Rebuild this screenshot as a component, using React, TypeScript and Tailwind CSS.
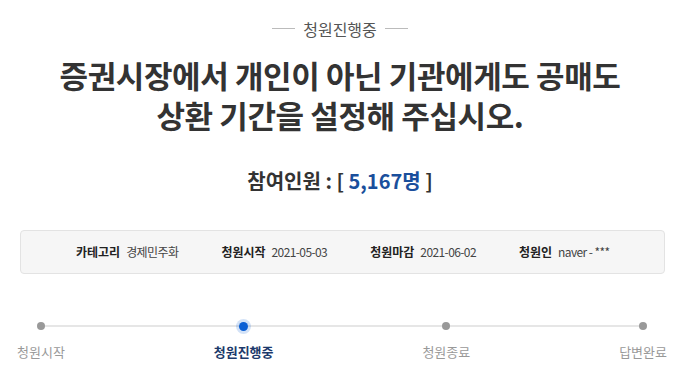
const info = [
  { label: "카테고리", value: "경제민주화" },
  { label: "청원시작", value: "2021-05-03" },
  { label: "청원마감", value: "2021-06-02" },
  { label: "청원인", value: "naver - ***" },
];

const steps = [
  { name: "청원시작", active: false },
  { name: "청원진행중", active: true },
  { name: "청원종료", active: false },
  { name: "답변완료", active: false },
];

export default function App() {
  return (
    <div
      className="w-[680px] h-[390px] bg-white text-[#333] overflow-hidden"
      style={{ fontFamily: '"Noto Sans CJK KR", "Noto Sans", sans-serif' }}
    >
      {/* Status */}
      <div className="flex items-center justify-center gap-[8px] pt-[17px] h-[40px]">
        <span className="w-[23px] h-px bg-[#bbb]" />
        <span className="text-[16px] text-[#555] leading-[22px]">청원진행중</span>
        <span className="w-[23px] h-px bg-[#bbb]" />
      </div>

      {/* Title */}
      <h1 className="mt-[15px] text-center text-[31px] font-bold tracking-[-0.4px] text-[#333]">
        <div className="leading-[40px] h-[40px]">증권시장에서 개인이 아닌 기관에게도 공매도</div>
        <div className="leading-[40px] h-[40px]">상환 기간을 설정해 주십시오.</div>
      </h1>

      {/* Count */}
      <div className="mt-[32px] text-center text-[20px] font-bold leading-[28px] text-[#333]">
        참여인원 : [ <span className="text-[#1a4f9c]">5,167명</span> ]
      </div>

      {/* Info box */}
      <div className="ml-[20px] mr-[15px] mt-[35px] h-[44px] rounded-[4px] border border-[#e3e3e3] bg-[#f6f6f6] flex items-center pl-[55px] gap-[43px] text-[12px]">
        {info.map((item) => (
          <div key={item.label} className="flex items-center gap-[6px]">
            <span className="font-bold text-[#222]">{item.label}</span>
            <span className="text-[#444] tracking-[-0.6px]">{item.value}</span>
          </div>
        ))}
      </div>

      {/* Progress */}
      <div className="relative ml-[17px] mr-[13px] mt-[46px] h-[40px]">
        <div className="absolute left-[22px] right-[22px] top-[5px] h-[2px] bg-[#e6e6e6]" />
        <div className="relative flex justify-between">
          {steps.map((s) => (
            <div key={s.name} className="flex flex-col items-center">
              <div className="h-[12px] flex items-center justify-center">
                {s.active ? (
                  <span className="w-[9px] h-[9px] rounded-full bg-[#0a5fd4] shadow-[0_0_0_3px_rgba(10,95,212,0.18)]" />
                ) : (
                  <span className="w-[8px] h-[8px] rounded-full bg-[#999]" />
                )}
              </div>
              <span
                className={
                  s.active
                    ? "mt-[11px] text-[13px] font-bold text-[#1c3a6b] leading-[18px]"
                    : "mt-[11px] text-[13px] text-[#999] leading-[18px]"
                }
              >
                {s.name}
              </span>
            </div>
          ))}
        </div>
      </div>
    </div>
  );
}
